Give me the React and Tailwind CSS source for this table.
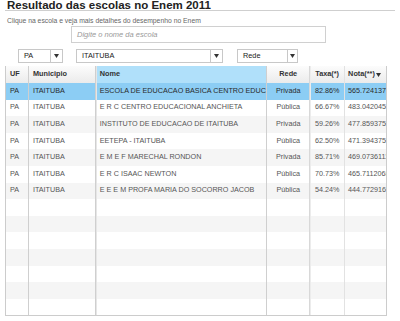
import React from 'react'

const escolas = [
  ['PA', 'ITAITUBA', 'ESCOLA DE EDUCACAO BASICA CENTRO EDUCACIONAL', 'Privada', '82.86%', '565.724137931'],
  ['PA', 'ITAITUBA', 'E R C CENTRO EDUCACIONAL ANCHIETA', 'Pública', '66.67%', '483.042045454'],
  ['PA', 'ITAITUBA', 'INSTITUTO DE EDUCACAO DE ITAITUBA', 'Privada', '59.26%', '477.859375000'],
  ['PA', 'ITAITUBA', 'EETEPA - ITAITUBA', 'Pública', '62.50%', '471.394375000'],
  ['PA', 'ITAITUBA', 'E M E F MARECHAL RONDON', 'Privada', '85.71%', '469.073611111'],
  ['PA', 'ITAITUBA', 'E R C ISAAC NEWTON', 'Pública', '70.73%', '465.711206896'],
  ['PA', 'ITAITUBA', 'E E E M PROFA MARIA DO SOCORRO JACOB', 'Pública', '54.24%', '444.772916666'],
]

// larguras e alinhamento de cada coluna
const colunas = [
  'w-[23px] pl-[4px] text-left border-r border-[#cfcfcf]',
  'w-[67px] pl-[4px] text-left border-r border-[#cfcfcf]',
  'w-[172px] pl-[4px] text-left border-r border-[#cfcfcf] shadow-[inset_1px_0_0_#e6e6e6]',
  'w-[43px] text-center border-r border-[#d8d8d8]',
  'w-[35px] text-center border-r border-[#e2e2e2] shadow-[inset_1px_0_0_#ececec]',
  'w-[41px] pl-[3px] text-left',
]

function Seta() {
  return (
    <svg width="5" height="4" viewBox="0 0 5 4">
      <path d="M0 0 L5 0 L2.5 4 Z" fill="#333" />
    </svg>
  )
}

function Seletor({ texto, largura, divisor }) {
  return (
    <div className={`flex h-[14px] items-stretch border border-[#c8c8c8] bg-white ${largura}`}>
      <div className={`flex items-center pl-[5px] text-[7.3px] text-[#1a1a1a] ${divisor}`}>{texto}</div>
      <div className="flex flex-1 items-center justify-center border-l border-[#c8c8c8]">
        <Seta />
      </div>
    </div>
  )
}

export default function App() {
  const linhas = []
  for (let i = 0; i < 14; i++) linhas.push(escolas[i] || ['', '', '', '', '', ''])

  return (
    <div className="w-[400px] h-[321px] overflow-hidden bg-white font-['Liberation_Sans',Arial,sans-serif]">
      <div className="mx-[5px] h-[12px] border-b border-[#cfcfcf]">
        <h2 className="-mt-[1px] pl-[2px] text-[11.5px] font-bold leading-[12px] text-[#222]">
          Resultado das escolas no Enem 2011
        </h2>
      </div>

      <p className="mt-[6px] h-[8px] pl-[7px] text-[6.8px] leading-[8px] text-[#666]">
        Clique na escola e veja mais detalhes do desempenho no Enem
      </p>

      <div className="mt-[1px] ml-[71px] flex h-[17px] w-[255px] items-center border border-[#d0d0d0] pl-[5px]">
        <span className="text-[7.5px] italic text-[#999]">Digite o nome da escola</span>
      </div>

      <div className="mt-[6px] flex">
        <div className="ml-[18px]">
          <Seletor texto="PA" largura="w-[45px]" divisor="w-[31px]" />
        </div>
        <div className="ml-[13px]">
          <Seletor texto="ITAITUBA" largura="w-[147px]" divisor="w-[133px]" />
        </div>
        <div className="ml-[14px]">
          <Seletor texto="Rede" largura="w-[61px]" divisor="w-[49px]" />
        </div>
      </div>

      <div className="mt-[3px] ml-[5px] w-[382px] border-l border-r border-b border-[#cccccc]">
        <div className="flex h-[17px] bg-linear-to-b from-[#fcfcfc] to-[#ebebeb] text-[7.3px] font-bold text-[#333]">
          {['UF', 'Municipio', 'Nome', 'Rede', 'Taxa(*)', 'Nota(**)'].map((t, c) => (
            <div
              key={c}
              className={`flex h-full items-center ${c === 3 || c === 4 ? 'justify-center' : ''} ${c === 2 ? 'bg-[#b0e0fa]' : ''} ${colunas[c]}`}
            >
              {t}
              {c === 5 && (
                <span className="ml-[1px]">
                  <Seta />
                </span>
              )}
            </div>
          ))}
        </div>

        {linhas.map((l, i) => (
          <div
            key={i}
            className={`flex h-[16.6px] text-[7.2px] ${
              i === 0 ? 'bg-[#8ccdf4] text-[#2a2a2a]' : i % 2 === 0 ? 'bg-[#f5f5f5] text-[#555]' : 'bg-white text-[#555]'
            }`}
          >
            {l.map((v, c) => (
              <div key={c} className={`flex h-full items-center overflow-hidden whitespace-nowrap ${c === 3 || c === 4 ? 'justify-center' : ''} ${colunas[c]}`}>
                {v}
              </div>
            ))}
          </div>
        ))}
      </div>
    </div>
  )
}
